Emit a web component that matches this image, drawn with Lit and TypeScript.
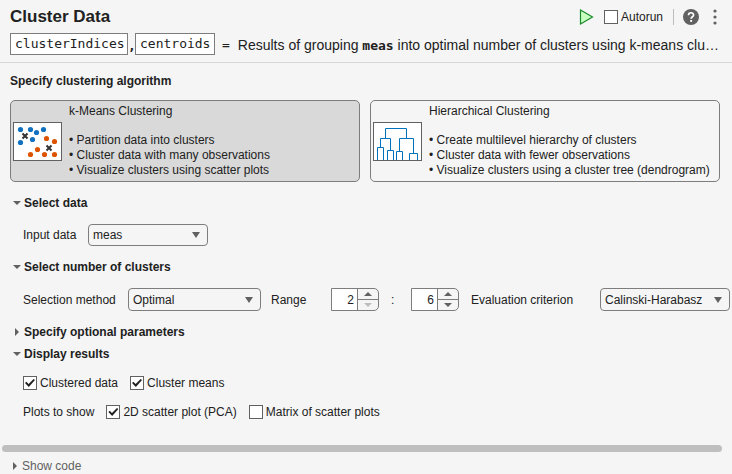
import { LitElement, html, css, svg } from "lit";
import { customElement, property, state } from "lit/decorators.js";
import { classMap } from "lit/directives/class-map.js";

const base = css`
  :host {
    box-sizing: border-box;
    color: #212121;
    font: 12px/16px "Liberation Sans", Arial, sans-serif;
  }
  *,
  *::before {
    box-sizing: border-box;
  }
  button,
  input,
  select {
    margin: 0;
    padding: 0;
    font: inherit;
    color: inherit;
    background: none;
    border: 0;
    border-radius: 0;
    outline-offset: 1px;
  }
  svg {
    display: block;
  }
`;

@customElement("task-select")
class TaskSelect extends LitElement {
  @property() name = "";
  @property() label = "";
  @property({ attribute: false }) options: string[] = [];

  static styles = [
    base,
    css`
      :host {
        display: flex;
        flex: none;
        align-items: center;
        gap: 10px;
      }
      .box {
        flex: 1;
        display: grid;
        align-items: center;
      }
      select,
      svg {
        grid-area: 1 / 1;
      }
      select {
        appearance: none;
        width: 100%;
        height: 22px;
        padding: 0 22px 0 4px;
        border: 1px solid #7d7d7d;
        border-radius: 4px;
      }
      :host([tall]) select {
        height: 23px;
      }
      svg {
        justify-self: end;
        margin-right: 8px;
        pointer-events: none;
      }
      label {
        flex: none;
        width: var(--label-width, auto);
      }
    `,
  ];

  render() {
    return html`
      <label for="field">${this.label}</label>
      <div class="box">
        <select id="field" name=${this.name}>
          ${this.options.map((o) => html`<option>${o}</option>`)}
        </select>
        <svg width="8" height="6" viewBox="0 0 8 6" aria-hidden="true">
          <path d="M0 0H8L4 6Z" fill="#616161" />
        </svg>
      </div>
    `;
  }
}

@customElement("task-spinner")
class TaskSpinner extends LitElement {
  @property() label = "";
  @property({ type: Number }) value = 0;
  @property({ type: Number }) min = 2;

  static styles = [
    base,
    css`
      :host {
        display: flex;
        flex: none;
        width: 48px;
        height: 23px;
        border: 1px solid #7d7d7d;
        border-radius: 0 5px 5px 0;
        overflow: hidden;
      }
      input {
        width: 26px;
        padding-right: 3px;
        text-align: right;
        background: #fff;
        border-right: 1px solid #7d7d7d;
      }
      .steps {
        flex: 1;
        display: grid;
        grid-template-rows: 1fr 1fr;
      }
      button {
        display: grid;
        place-items: center;
        color: #616161;
      }
      button:first-child {
        border-bottom: 1px solid #7d7d7d;
      }
      button:disabled {
        color: #bdbdbd;
      }
    `,
  ];

  private step(by: number) {
    this.value = Math.max(this.min, this.value + by);
  }

  render() {
    return html`
      <input inputmode="numeric" aria-label=${this.label} .value=${String(this.value)} />
      <div class="steps">
        <button aria-label="Increase" @click=${() => this.step(1)}>
          <svg width="8" height="4" viewBox="0 0 8 4"><path d="M0 4H8L4 0Z" fill="currentColor" /></svg>
        </button>
        <button aria-label="Decrease" ?disabled=${this.value <= this.min} @click=${() => this.step(-1)}>
          <svg width="8" height="4" viewBox="0 0 8 4"><path d="M0 0H8L4 4Z" fill="currentColor" /></svg>
        </button>
      </div>
    `;
  }
}

@customElement("task-check")
class TaskCheck extends LitElement {
  @property() label = "";
  @property({ type: Boolean }) checked = false;

  static styles = [
    base,
    css`
      :host {
        display: block;
        flex: none;
      }
      label {
        display: flex;
        align-items: center;
        gap: 3px;
      }
      input {
        appearance: none;
        display: grid;
        place-items: center;
        width: 14px;
        height: 14px;
        background: #fff;
        border: 1px solid #616161;
      }
      input:checked::before {
        content: "";
        width: 10px;
        height: 8px;
        background: #212121;
        clip-path: polygon(0 50%, 14% 34%, 36% 62%, 86% 0, 100% 14%, 38% 100%);
      }
    `,
  ];

  render() {
    return html`<label><input type="checkbox" .checked=${this.checked} />${this.label}</label>`;
  }
}

const bluePoints = [[7, 7], [17, 7], [30, 7], [23, 10], [19, 17], [7, 20]];
const orangePoints = [[33, 16], [41, 19], [24, 27], [17, 32], [31, 32], [41, 32]];

const scatterIcon = html`
  <svg class="thumb" width="49" height="39" viewBox="0 0 49 39" aria-hidden="true">
    <rect x=".5" y=".5" width="48" height="38" fill="#fff" stroke="#616161" />
    ${bluePoints.map(([x, y]) => svg`<circle cx=${x + 0.5} cy=${y + 0.5} r="2.6" fill="#1171be" />`)}
    ${orangePoints.map(([x, y]) => svg`<circle cx=${x + 0.5} cy=${y + 0.5} r="2.6" fill="#dd5400" />`)}
    <path d="M9.500 11.500l5 5m0-5l-5 5M33.500 23.500l5 5m0-5l-5 5" stroke="#333" stroke-width="2" />
  </svg>
`;

const treeIcon = html`
  <svg class="thumb" width="49" height="39" viewBox="0 0 49 39" aria-hidden="true">
    <rect x=".5" y=".5" width="48" height="38" fill="#fff" stroke="#616161" />
    <path
      d="M12.500 16V6.500H33.500V16M7.500 25V16.500H17.500V28M26.500 29V16.500H40.500V31M4.500 38V25.500H10.500V38M14.500 38V28.500H20.500V38M23.500 38V29.500H29.500V38M36.500 38V31.500H44.500V38"
      fill="none"
      stroke="#0072bd"
    />
  </svg>
`;

const algorithms = [
  {
    id: "kmeans",
    name: "k-Means Clustering",
    icon: scatterIcon,
    points: ["Partition data into clusters", "Cluster data with many observations", "Visualize clusters using scatter plots"],
  },
  {
    id: "hierarchical",
    name: "Hierarchical Clustering",
    icon: treeIcon,
    points: [
      "Create multilevel hierarchy of clusters",
      "Cluster data with fewer observations",
      "Visualize clusters using a cluster tree (dendrogram)",
    ],
  },
];

@customElement("app-root")
class AppRoot extends LitElement {
  @state() private algorithm = "kmeans";
  @state() private open: Record<string, boolean> = { data: true, number: true, optional: false, results: true };

  static styles = [
    base,
    css`
      :host {
        display: block;
        min-height: 100vh;
        background: #f5f5f5;
        overflow: hidden;
      }
      header {
        padding: 6px 10px 7px;
        border-bottom: 1px solid #d6d6d6;
      }
      .bar,
      .tools,
      .output,
      .row {
        display: flex;
        align-items: center;
      }
      .bar {
        justify-content: space-between;
        height: 22px;
      }
      h1,
      h2 {
        margin: 0;
        font-size: 17px;
        line-height: 22px;
      }
      .tools {
        gap: 10px;
        height: 20px;
      }
      .help {
        display: flex;
        padding-left: 9px;
        border-left: 1px solid #bdbdbd;
      }
      .more {
        padding: 0 5px 0 4px;
      }
      .output {
        height: 22px;
        margin-top: 5px;
      }
      .variable {
        height: 22px;
        padding: 0 3px 2px 4px;
        background: #fff;
        border: 1px solid #7d7d7d;
      }
      .variable,
      code,
      .sign,
      .comma {
        font-family: "DejaVu Sans Mono", monospace;
        font-size: 13px;
      }
      .indices {
        width: 118px;
      }
      .centroids {
        width: 80px;
      }
      .comma {
        width: 7px;
        padding-top: 4px;
        font-weight: bold;
      }
      .sign {
        padding: 2px 8px 0 7px;
      }
      .summary {
        flex: 1;
        margin: 0;
        padding-top: 2px;
        font-size: 14px;
        line-height: 20px;
        white-space: nowrap;
      }
      code {
        font-weight: bold;
      }
      main {
        padding: 10px 0 22px 10px;
      }
      h2,
      .toggle {
        font-size: 12px;
        font-weight: bold;
        line-height: 16px;
      }
      .cards {
        display: grid;
        grid-template-columns: 1fr 1fr;
        gap: 10px;
        margin: 11px 12px 0 0;
      }
      .card {
        display: flex;
        align-items: center;
        gap: 7px;
        height: 82px;
        padding: 0 2px;
        text-align: left;
        line-height: 15px;
        border: 1px solid #7d7d7d;
        border-radius: 5px;
      }
      .card.selected {
        background: #d9d9d9;
      }
      .thumb {
        flex: none;
      }
      .card-text {
        align-self: start;
        padding-top: 3px;
        white-space: nowrap;
      }
      .card-text span {
        display: block;
      }
      .card-text .card-name {
        margin-bottom: 14px;
      }
      .section {
        margin-top: 13px;
      }
      .section.close {
        margin-top: 6px;
      }
      .toggle {
        display: flex;
        align-items: center;
        gap: 2px;
        padding-left: 2px;
      }
      .toggle svg {
        width: 10px;
      }
      .row {
        gap: 10px;
        margin: 13px 0 0 13px;
      }
      .row.checks {
        gap: 12px;
        height: 22px;
        margin-top: 10px;
      }
      .row.checks + .checks {
        margin-top: 7px;
      }
      .input-data {
        --label-width: 55px;
        width: 185px;
      }
      .method {
        --label-width: 95px;
        width: 238px;
      }
      .range {
        flex: none;
        width: 50px;
      }
      .colon {
        flex: none;
        width: 14px;
        padding-left: 2px;
      }
      .colon + task-spinner {
        margin-left: -2px;
      }
      .criterion {
        --label-width: 119px;
        width: 259px;
        margin-left: 2px;
      }
      .scroll {
        height: 7px;
        margin: 0 10px 0 2px;
        border-radius: 4px;
        background: #bfbfbf;
      }
      footer {
        padding: 6px 8px 0;
      }
      .show-code {
        font-weight: normal;
        color: #616161;
      }
    `,
  ];

  private arrow(open: boolean) {
    return html`<svg height="8" viewBox="0 0 10 8" aria-hidden="true">
      <path d=${open ? "M1 2H9L5 6Z" : "M3 0V8L7 4Z"} fill="#616161" />
    </svg>`;
  }

  private toggle(key: string, title: string) {
    const open = this.open[key];
    return html`<button
      class="toggle"
      aria-expanded=${open}
      @click=${() => (this.open = { ...this.open, [key]: !open })}
    >
      ${this.arrow(open)}${title}
    </button>`;
  }

  render() {
    return html`
      <header>
        <div class="bar">
          <h1>Cluster Data</h1>
          <div class="tools">
            <button aria-label="Run">
              <svg width="15" height="16" viewBox="0 0 15 16">
                <path d="M1.500 1V15L13.500 8Z" fill="#c8ffc0" stroke="#1c8a2c" stroke-width="1.200" />
              </svg>
            </button>
            <task-check label="Autorun"></task-check>
            <div class="help">
              <button aria-label="Help">
                <svg width="16" height="16" viewBox="0 0 16 16">
                  <circle cx="8" cy="8" r="8" fill="#616161" />
                  <path d="M5.500 6.200C5.500 2.900 10.600 3 10.600 6C10.600 7.800 8.100 7.700 8.100 9.800" fill="none" stroke="#fff" stroke-width="1.700" />
                  <rect x="7.200" y="11" width="1.900" height="1.900" fill="#fff" />
                </svg>
              </button>
            </div>
            <button class="more" aria-label="More options">
              <svg width="4" height="16" viewBox="0 0 4 16" fill="#616161">
                <circle cx="2" cy="2" r="1.600" />
                <circle cx="2" cy="8" r="1.600" />
                <circle cx="2" cy="14" r="1.600" />
              </svg>
            </button>
          </div>
        </div>
        <div class="output">
          <input class="variable indices" aria-label="Cluster indices variable" value="clusterIndices" />
          <span class="comma">,</span>
          <input class="variable centroids" aria-label="Centroids variable" value="centroids" />
          <span class="sign">=</span>
          <p class="summary">
            Results of grouping <code>meas</code> into optimal number of clusters using k-means clu…
          </p>
        </div>
      </header>

      <main>
        <h2>Specify clustering algorithm</h2>
        <div class="cards">
          ${algorithms.map(
            (a) => html`
              <button
                class=${classMap({ card: true, selected: a.id === this.algorithm })}
                aria-pressed=${a.id === this.algorithm}
                @click=${() => (this.algorithm = a.id)}
              >
                ${a.icon}
                <span class="card-text">
                  <span class="card-name">${a.name}</span>
                  ${a.points.map((p) => html`<span>• ${p}</span>`)}
                </span>
              </button>
            `
          )}
        </div>

        <section class="section">
          ${this.toggle("data", "Select data")}
          ${this.open.data
            ? html`<div class="row">
                <task-select class="input-data" name="data" label="Input data" .options=${["meas"]}></task-select>
              </div>`
            : ""}
        </section>

        <section class="section">
          ${this.toggle("number", "Select number of clusters")}
          ${this.open.number
            ? html`<div class="row">
                <task-select tall class="method" name="method" label="Selection method" .options=${["Optimal", "Manual"]}></task-select>
                <span class="range">Range</span>
                <task-spinner label="Range minimum" .value=${2}></task-spinner>
                <span class="colon">:</span>
                <task-spinner label="Range maximum" .value=${6}></task-spinner>
                <task-select
                  tall
                  class="criterion"
                  name="criterion"
                  label="Evaluation criterion"
                  .options=${["Calinski-Harabasz", "Davies-Bouldin", "Silhouette"]}
                ></task-select>
              </div>`
            : ""}
        </section>

        <section class="section">${this.toggle("optional", "Specify optional parameters")}</section>

        <section class="section close">
          ${this.toggle("results", "Display results")}
          ${this.open.results
            ? html`<div class="row checks">
                  <task-check label="Clustered data" checked></task-check>
                  <task-check label="Cluster means" checked></task-check>
                </div>
                <div class="row checks">
                  <span>Plots to show</span>
                  <task-check label="2D scatter plot (PCA)" checked></task-check>
                  <task-check label="Matrix of scatter plots"></task-check>
                </div>`
            : ""}
        </section>
      </main>

      <div class="scroll"></div>
      <footer>
        <button class="toggle show-code">${this.arrow(false)}Show code</button>
      </footer>
    `;
  }
}
